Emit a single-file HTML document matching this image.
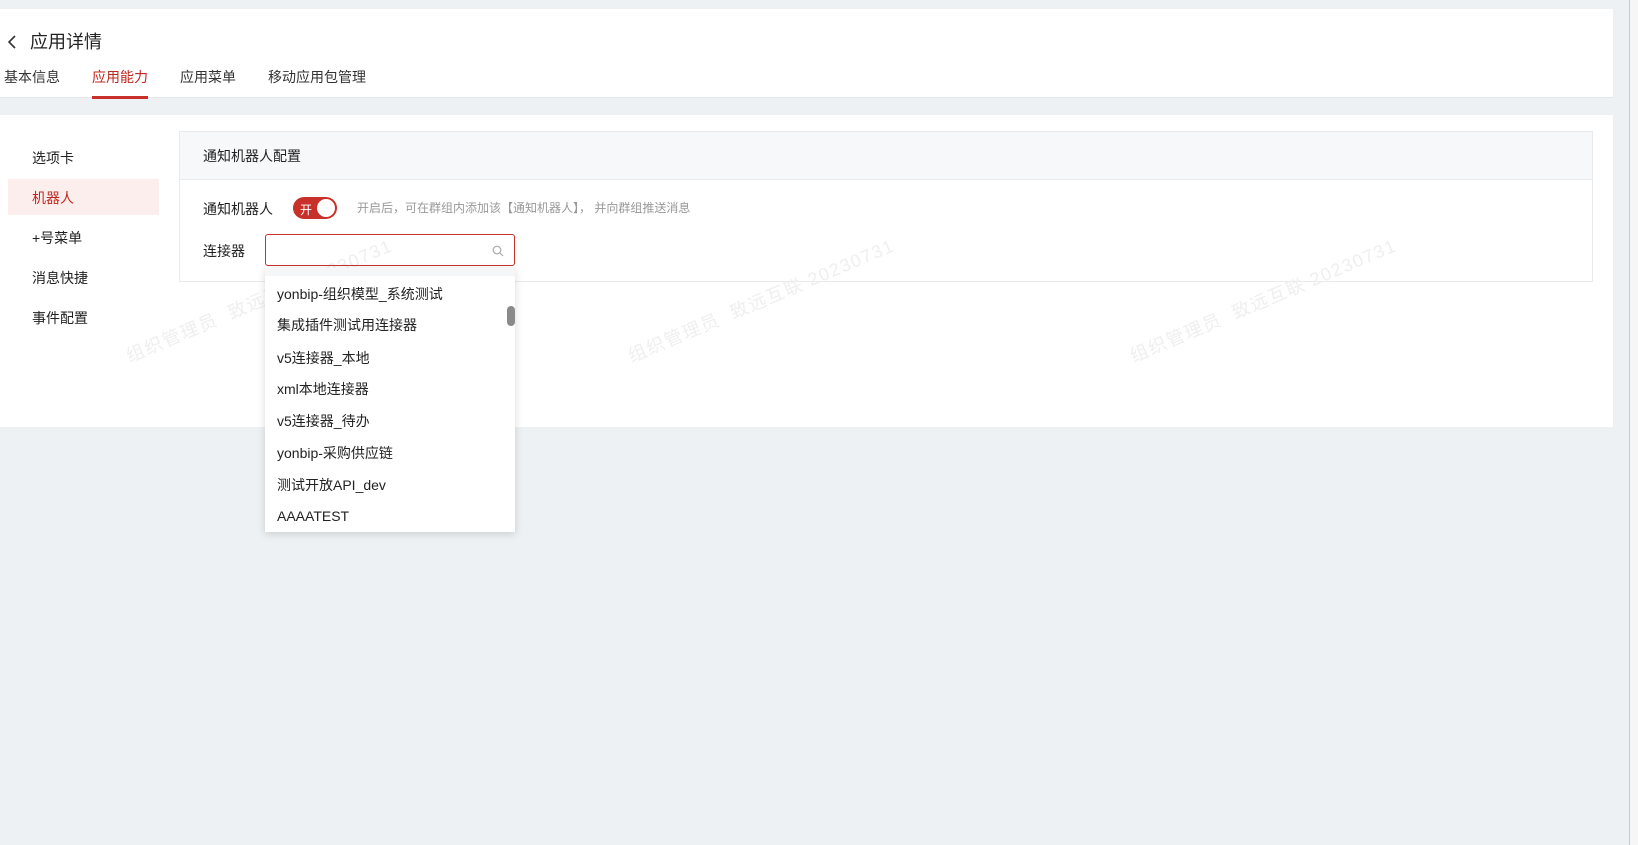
<!DOCTYPE html>
<html><head><meta charset="utf-8"><style>
*{margin:0;padding:0;box-sizing:border-box}
body{width:1638px;height:845px;background:#edf1f4;font-family:"Liberation Sans","Noto Sans CJK SC",sans-serif;position:relative;overflow:hidden;color:#222;font-size:14px}
.abs{position:absolute}
.wm{position:absolute;color:#efefef;font-size:18px;transform:rotate(-23deg);transform-origin:left bottom;white-space:nowrap;letter-spacing:1.5px}
.it{position:absolute;left:277px;font-size:14px;color:#222;line-height:20px}
</style></head><body>
<div class="abs" style="left:0;top:9px;width:1613px;height:89px;background:#fff;border-bottom:1px solid #e4e7ea"></div>
<svg class="abs" style="left:6px;top:34px" width="12" height="16"><path d="M9 2 L3 8 L9 14" stroke="#333" stroke-width="1.6" fill="none"/></svg>
<div class="abs" style="left:30px;top:28px;font-size:18px;color:#222">应用详情</div>
<div class="abs" style="left:4px;top:67px;color:#333">基本信息</div>
<div class="abs" style="left:92px;top:67px;color:#c0281f">应用能力</div>
<div class="abs" style="left:92px;top:96px;width:56px;height:3px;background:#c8302a"></div>
<div class="abs" style="left:180px;top:67px;color:#333">应用菜单</div>
<div class="abs" style="left:268px;top:67px;color:#333">移动应用包管理</div>

<div class="abs" style="left:0;top:115px;width:1613px;height:312px;background:#fff"></div>
<div class="abs" style="left:1629px;top:0;width:1px;height:845px;background:#c9c9c9"></div>
<div class="abs" style="left:1630px;top:0;width:8px;height:845px;background:#f6f6f6"></div>

<div class="abs" style="left:32px;top:148px">选项卡</div>
<div class="abs" style="left:8px;top:179px;width:151px;height:36px;background:#fdeeee"></div>
<div class="abs" style="left:32px;top:188px;color:#c0281f">机器人</div>
<div class="abs" style="left:32px;top:228px">+号菜单</div>
<div class="abs" style="left:32px;top:268px">消息快捷</div>
<div class="abs" style="left:32px;top:308px">事件配置</div>

<div class="abs" style="left:179px;top:131px;width:1414px;height:151px;border:1px solid #e8eaed;background:#fff"></div>
<div class="abs" style="left:180px;top:132px;width:1412px;height:48px;background:#f7f8fa;border-bottom:1px solid #e8eaed"></div>
<div class="abs" style="left:203px;top:146px">通知机器人配置</div>

<div class="wm" style="left:132px;top:342px">组织管理员&nbsp; 致远互联 20230731</div>
<div class="wm" style="left:634px;top:342px">组织管理员&nbsp; 致远互联 20230731</div>
<div class="wm" style="left:1136px;top:342px">组织管理员&nbsp; 致远互联 20230731</div>

<div class="abs" style="left:203px;top:199px">通知机器人</div>
<div class="abs" style="left:293px;top:197px;width:44px;height:22px;border-radius:11px;background:#c8302a"></div>
<div class="abs" style="left:300px;top:201px;color:#fff;font-size:12px">开</div>
<div class="abs" style="left:317px;top:199px;width:18px;height:18px;border-radius:9px;background:#fff"></div>
<div class="abs" style="left:357px;top:199px;font-size:12px;color:#999">开启后，可在群组内添加该【通知机器人】，&nbsp;并向群组推送消息</div>

<div class="abs" style="left:203px;top:241px">连接器</div>
<div class="abs" style="left:265px;top:234px;width:250px;height:32px;border:1px solid #c8302a;border-radius:3px;background:transparent"></div>
<svg class="abs" style="left:492px;top:245px" width="12" height="12"><circle cx="5" cy="5" r="3.8" stroke="#aaa" stroke-width="1.2" fill="none"/><path d="M8 8 L11 11" stroke="#aaa" stroke-width="1.2"/></svg>

<div class="abs" style="left:265px;top:268px;width:250px;height:264px;background:#fff;box-shadow:0 2px 8px rgba(0,0,0,.15);border-top:8px solid #f5f6f8"></div>
<div class="abs" style="left:507px;top:306px;width:8px;height:20px;border-radius:4px;background:#8a8a8a"></div>
<div class="it" style="top:284px">yonbip-组织模型_系统测试</div>
<div class="it" style="top:315px">集成插件测试用连接器</div>
<div class="it" style="top:348px">v5连接器_本地</div>
<div class="it" style="top:379px">xml本地连接器</div>
<div class="it" style="top:411px">v5连接器_待办</div>
<div class="it" style="top:443px">yonbip-采购供应链</div>
<div class="it" style="top:475px">测试开放API_dev</div>
<div class="it" style="top:506px">AAAATEST</div>
</body></html>
